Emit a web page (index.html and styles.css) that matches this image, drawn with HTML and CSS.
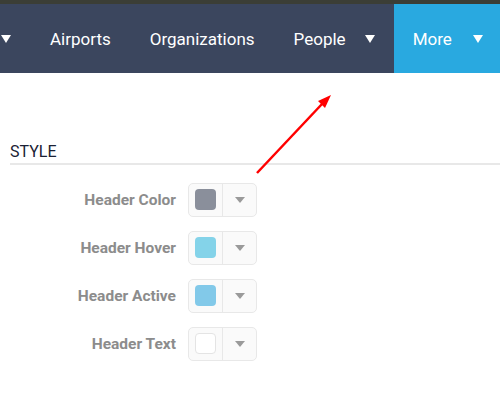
FILE: index.html
```html
<!DOCTYPE html>
<html lang="en">
<head>
    <meta charset="UTF-8">
    <meta name="viewport" content="width=device-width, initial-scale=1.0">
    <title>Style Settings</title>
    <link rel="stylesheet" href="styles.css">
</head>
<body>

    <div class="topbar"></div>
    <nav class="menu">
        <div class="menu-item first"><span class="caret"></span></div>
        <div class="menu-item">Airports</div>
        <div class="menu-item">Organizations</div>
        <div class="menu-item">People <span class="caret"></span></div>
        <div class="menu-item active">More <span class="caret"></span></div>
    </nav>

    <!-- pointer annotation -->
    <svg class="pointer" width="500" height="394" viewBox="0 0 500 394">
        <line x1="257" y1="173" x2="322" y2="104" stroke="#f00" stroke-width="2.5"/>
        <polygon points="331,95 318,101 325,108" fill="#f00"/>
    </svg>

    <div class="section">
        <h2 class="section-title">STYLE</h2>

        <div class="field">
            <label>Header Color</label>
            <div class="picker">
                <span class="swatch" style="background-color: #8a8f9b"></span>
                <span class="picker-arrow"><span class="tri"></span></span>
            </div>
        </div>
        <div class="field">
            <label>Header Hover</label>
            <div class="picker">
                <span class="swatch" style="background-color: #84d3e9"></span>
                <span class="picker-arrow"><span class="tri"></span></span>
            </div>
        </div>
        <div class="field">
            <label>Header Active</label>
            <div class="picker">
                <span class="swatch" style="background-color: #82c9e9"></span>
                <span class="picker-arrow"><span class="tri"></span></span>
            </div>
        </div>
        <div class="field">
            <label>Header Text</label>
            <div class="picker">
                <span class="swatch light" style="background-color: #ffffff"></span>
                <span class="picker-arrow"><span class="tri"></span></span>
            </div>
        </div>
    </div>

</body>
</html>
```

FILE: styles.css
```css
body {
    font-family: Roboto, "Liberation Sans", sans-serif;
    margin: 0;
    padding: 0;
    background-color: #fff;
    position: relative;
}

.topbar {
    height: 4px;
    background-color: #3b3e36;
}

.menu {
    display: flex;
    height: 69px;
    background-color: #3b465e;
}

.menu-item {
    display: flex;
    align-items: center;
    color: #fff;
    font-size: 17px;
    padding: 0 19px 0 20px;
    white-space: nowrap;
}

.menu-item.first {
    padding: 0 19px 0 1px;
}

.menu-item.active {
    background-color: #29a9e0;
    padding: 0 18px 0 19px;
    margin-left: auto;
    margin-right: 3px;
}

.menu-item .caret {
    margin-left: 19px;
}

.menu-item.active .caret {
    margin-left: 21px;
}

.menu-item.first .caret {
    margin-left: 0;
}

.caret {
    display: inline-block;
    width: 0;
    height: 0;
    border-left: 5px solid transparent;
    border-right: 5px solid transparent;
    border-top: 8px solid #fff;
}

.pointer {
    position: absolute;
    left: 0;
    top: 0;
    pointer-events: none;
}

/* Section */
.section {
    padding: 70px 0 0 10px;
}

.section-title {
    margin: 0 0 18px;
    font-size: 16px;
    font-weight: normal;
    line-height: 18px;
    color: #1a2134;
    padding-bottom: 2px;
    border-bottom: 2px solid #e8e8e8;
}

.field {
    display: flex;
    align-items: center;
    margin-bottom: 14px;
}

.field label {
    width: 166px;
    text-align: right;
    font-size: 15.5px;
    font-weight: bold;
    color: #8c8c8c;
    margin-right: 12px;
}

.picker {
    display: flex;
    height: 32px;
    border: 1px solid #e8e8e8;
    border-radius: 5px;
    background-color: #fafafa;
}

.swatch {
    width: 21px;
    height: 21px;
    margin: 5px 6px 0;
    border-radius: 4px;
}

.swatch.light {
    border: 1px solid #e4e4e4;
    width: 19px;
    height: 19px;
}

.picker-arrow {
    width: 33px;
    border-left: 1px solid #e8e8e8;
    display: flex;
    align-items: center;
    justify-content: center;
}

.tri {
    width: 0;
    height: 0;
    border-left: 5px solid transparent;
    border-right: 5px solid transparent;
    border-top: 6px solid #9a9a9a;
}
```
